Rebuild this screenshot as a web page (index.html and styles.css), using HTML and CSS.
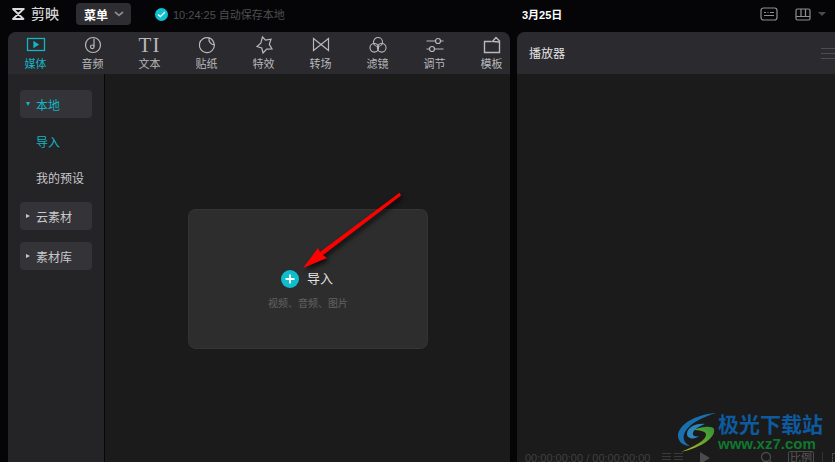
FILE: index.html
```html
<!DOCTYPE html>
<html lang="zh-CN">
<head>
    <meta charset="UTF-8">
    <meta name="viewport" content="width=device-width, initial-scale=1.0">
    <title>剪映</title>
    <link rel="stylesheet" href="styles.css">
</head>
<body>
    <header class="topbar">
        <div class="brand">
            <svg class="brand-logo" width="14" height="12" viewBox="0 0 14 12" fill="none" stroke="#dcdcdc" stroke-width="1.800" stroke-linejoin="round"><path d="M13.500 1H2L12.500 11H2L12.500 1"/></svg>
            <span class="brand-name">剪映</span>
        </div>
        <button class="menu-btn" type="button">菜单
            <svg width="10" height="6" viewBox="0 0 10 6" fill="none" stroke="#8a8a8e" stroke-width="1.800"><path d="M1 1l4 3.400L9 1"/></svg>
        </button>
        <div class="autosave">
            <span class="check-dot"><svg width="9" height="7" viewBox="0 0 9 7" fill="none" stroke="#fff" stroke-width="1.300"><path d="M1 3.600l2.300 2L8 1"/></svg></span>
            <span>10:24:25 自动保存本地</span>
        </div>
        <div class="date">3月25日</div>
        <div class="top-tools">
            <svg width="18" height="14" viewBox="0 0 18 14" fill="none" stroke="#8f8f92" stroke-width="1.200"><rect x="1" y="1" width="16" height="12" rx="2.500"/><path d="M4 5.500h2M7.500 5.500h1M10 5.500h4M4 8.500h10"/></svg>
            <svg class="layout-icon" width="16" height="13" viewBox="0 0 16 13" fill="none" stroke="#8f8f92" stroke-width="1.200"><rect x="1" y="1" width="14" height="11" rx="1.500"/><path d="M1 8.500h14M6 1v7.500M10.500 1v7.500"/></svg>
            <span class="caret-down"></span>
        </div>
    </header>

    <main class="workspace">
        <section class="panel media-panel">
            <nav class="tabs">
                <a class="tab active" href="#media">
                    <svg width="20" height="20" viewBox="0 0 20 20" fill="none" stroke="#14b5c4" stroke-width="1.300"><rect x="1.500" y="3.500" width="17" height="12"/><path d="M8 7l4 2.500-4 2.500z" fill="#14b5c4"/></svg>
                    <span>媒体</span>
                </a>
                <a class="tab" href="#audio">
                    <svg width="20" height="20" viewBox="0 0 20 20" fill="none" stroke="#b9b9bb" stroke-width="1.200"><circle cx="10" cy="10" r="7.500"/><path d="M11 3.500v8"/><circle cx="9.300" cy="11.800" r="1.800"/></svg>
                    <span>音频</span>
                </a>
                <a class="tab" href="#text">
                    <span class="tab-glyph">TI</span>
                    <span>文本</span>
                </a>
                <a class="tab" href="#sticker">
                    <svg width="20" height="20" viewBox="0 0 20 20" fill="none" stroke="#b9b9bb" stroke-width="1.200"><path d="M12 2.900A7.500 7.500 0 1 0 17.400 10 6 6 0 0 1 12 2.900zM12 2.900c2.700.8 4.800 3.500 5.400 7.100"/></svg>
                    <span>贴纸</span>
                </a>
                <a class="tab" href="#effect">
                    <svg width="20" height="20" viewBox="0 0 20 20" fill="none" stroke="#b9b9bb" stroke-width="1.200"><path d="M8.500 2l3 3.200 5.500-1-1.700 5.200 2.700 4.600-5.300.2-3.700 3.800-1.300-5L3 11.500l3.800-3.300z"/></svg>
                    <span>特效</span>
                </a>
                <a class="tab" href="#transition">
                    <svg width="20" height="20" viewBox="0 0 20 20" fill="none" stroke="#b9b9bb" stroke-width="1.200"><path d="M2.500 3.500v12L17.500 3.500v12z"/></svg>
                    <span>转场</span>
                </a>
                <a class="tab" href="#filter">
                    <svg width="20" height="20" viewBox="0 0 20 20" fill="none" stroke="#b9b9bb" stroke-width="1.100"><circle cx="10" cy="7" r="4.500"/><circle cx="6.300" cy="12.800" r="4.300"/><circle cx="13.700" cy="12.800" r="4.300"/></svg>
                    <span>滤镜</span>
                </a>
                <a class="tab" href="#adjust">
                    <svg width="20" height="20" viewBox="0 0 20 20" fill="none" stroke="#b9b9bb" stroke-width="1.200"><path d="M1.500 6h9M15.500 6h3M1.500 14h3M9.500 14h9"/><circle cx="13" cy="6" r="2.500"/><circle cx="7" cy="14" r="2.500"/></svg>
                    <span>调节</span>
                </a>
                <a class="tab" href="#template">
                    <svg width="20" height="20" viewBox="0 0 20 20" fill="none" stroke="#b9b9bb" stroke-width="1.400"><path d="M9.500 6.500H2.500v11h15v-11"/><path d="M10.500 6.500l3.500-4 3.500 3.500-1 1z"/></svg>
                    <span>模板</span>
                </a>
            </nav>
            <div class="media-body">
                <aside class="sidebar">
                    <div class="side-group active"><span class="tri-down"></span>本地</div>
                    <a class="side-link active" href="#import">导入</a>
                    <a class="side-link" href="#presets">我的预设</a>
                    <div class="side-group"><span class="tri-right"></span>云素材</div>
                    <div class="side-group"><span class="tri-right"></span>素材库</div>
                </aside>
                <div class="drop-area">
                    <div class="drop-card">
                        <div class="drop-title">
                            <span class="plus-dot"><svg width="10" height="10" viewBox="0 0 10 10" stroke="#fff" stroke-width="1.800"><path d="M5 .5v9M.5 5h9"/></svg></span>
                            <span>导入</span>
                        </div>
                        <p class="drop-hint">视频、音频、图片</p>
                    </div>
                </div>
            </div>
        </section>

        <section class="panel player-panel">
            <div class="player-head">
                <span>播放器</span>
                <span class="head-menu"></span>
            </div>
            <div class="player-view"></div>
            <div class="player-foot">
                <span class="timecode">00:00:00:00 / 00:00:00:00</span>
                <span class="grid-btn"></span>
                <span class="grid-btn"></span>
                <span class="play-btn"></span>
                <svg class="zoom-btn" width="14" height="14" viewBox="0 0 14 14" fill="none" stroke="#4b4b4b" stroke-width="1.300"><circle cx="6" cy="6" r="4.500"/><path d="M9.500 9.500l3 3"/></svg>
                <span class="ratio-btn">比例</span>
                <span class="foot-sep"></span>
                <span class="full-btn"></span>
            </div>
        </section>
    </main>

    <svg class="arrow" width="120" height="90" viewBox="295 185 120 90">
        <path d="M399.500 192.800L320 252l-2-4-15 20 24-10-4-3 78-59.500z" fill="#f00"/>
    </svg>

    <div class="watermark">
        <svg class="wm-logo" width="46" height="42" viewBox="0 0 46 42">
            <defs>
                <linearGradient id="wmGreen" x1="0" y1="1" x2="1" y2="0">
                    <stop offset="0" stop-color="#c9b02a"/>
                    <stop offset="0.6" stop-color="#5fa52e"/>
                    <stop offset="1" stop-color="#2f8f3a"/>
                </linearGradient>
            </defs>
            <path d="M41 2C24 3 6 11 3 23c-1 7 5 12 12 12-6-3-8-8-5-14C15 12 28 6 41 2z" fill="#1a6fae"/>
            <path d="M30 13c-10-1-18 4-18 10 0 5 8 6 12 2-3 1-7 0-6-3 1-4 7-7 12-9z" fill="#2a86bd"/>
            <path d="M19 19c5-3 19-5 20-1 2 8-11 18-33 23 14-6 26-12 25-18-1-3-7-4-12-4z" fill="url(#wmGreen)"/>
        </svg>
        <div class="wm-text">
            <span class="wm-name">极光下载站</span>
            <span class="wm-url">www.xz7.com</span>
        </div>
    </div>
</body>
</html>
```

FILE: styles.css
```css
:root {
    --top-bg: #050507;
    --panel-head: #2a2a2f;
    --side-bg: #242427;
    --body-bg: #1b1b1b;
    --group-bg: #333338;
    --accent: #14b5c4;
    --text: #c9c9cb;
}

* {
    margin: 0;
    padding: 0;
    box-sizing: border-box;
}

body {
    width: 835px;
    height: 462px;
    overflow: hidden;
    background-color: var(--top-bg);
    color: var(--text);
    font-family: "Liberation Sans", "Noto Sans CJK SC", sans-serif;
    font-size: 12px;
}

a {
    color: inherit;
    text-decoration: none;
}

/* top bar */
.topbar {
    display: flex;
    align-items: center;
    height: 32px;
    padding: 0 0 4px 11px;
}

.brand {
    display: flex;
    align-items: center;
    gap: 6px;
    width: 65px;
}

.brand-name {
    color: #d4d4d4;
    font-size: 14px;
    font-weight: 500;
    line-height: 1;
}

.menu-btn {
    display: flex;
    align-items: center;
    justify-content: space-between;
    width: 55px;
    height: 22px;
    padding: 0 7px 0 8px;
    border: none;
    border-radius: 4px;
    background-color: #2e2e32;
    color: #fff;
    font-family: inherit;
    font-size: 12px;
    font-weight: 700;
}

.autosave {
    display: flex;
    align-items: center;
    gap: 5px;
    margin-left: 24px;
    width: 340px;
    color: #4e4e52;
    font-size: 11px;
}

.check-dot {
    display: flex;
    align-items: center;
    justify-content: center;
    width: 13px;
    height: 13px;
    border-radius: 50%;
    background-color: #0fc0d0;
}

.date {
    width: 230px;
    margin-left: 27px;
    color: #fff;
    font-size: 11px;
    font-weight: 700;
}

.top-tools {
    display: flex;
    align-items: center;
    margin-left: 8px;
}

.layout-icon {
    margin-left: 17px;
}

.caret-down {
    margin-left: 7px;
    border-top: 4px solid #4a4a4e;
    border-left: 4px solid transparent;
    border-right: 4px solid transparent;
}

/* panels */
.workspace {
    display: flex;
    gap: 7px;
    height: 440px;
    padding-left: 8px;
}

.panel {
    display: flex;
    flex-direction: column;
    overflow: hidden;
    border-radius: 8px 8px 0 0;
    background-color: var(--body-bg);
}

.media-panel {
    width: 502px;
}

.player-panel {
    flex: 1;
    border-top-right-radius: 0;
}

.tabs {
    display: flex;
    flex: none;
    height: 42px;
    margin-left: -1px;
    background-color: var(--panel-head);
}

.tab {
    display: flex;
    flex: none;
    flex-direction: column;
    align-items: center;
    width: 57px;
    padding-top: 3px;
    color: #b9b9bb;
    font-size: 11px;
    line-height: 16px;
}

.tab svg {
    margin-bottom: 1px;
}

.tab.active {
    color: var(--accent);
}

.tab-glyph {
    height: 21px;
    color: #b9b9bb;
    font-family: "Liberation Serif", serif;
    font-size: 21px;
    letter-spacing: 1px;
    line-height: 20px;
}

.media-body {
    display: flex;
    flex: 1;
}

.sidebar {
    display: flex;
    flex-direction: column;
    width: 97px;
    padding: 16px 12px 0;
    border-right: 1px solid #08080a;
    background-color: var(--side-bg);
}

.side-group {
    display: flex;
    align-items: center;
    height: 28px;
    margin-bottom: 12px;
    padding-left: 6px;
    border-radius: 4px;
    background-color: var(--group-bg);
    font-size: 12px;
}

.side-group.active {
    margin-bottom: 0;
    color: var(--accent);
}

.side-link {
    height: 36px;
    margin-bottom: 6px;
    padding-left: 16px;
    font-size: 12px;
    line-height: 38px;
}

.side-link.active {
    margin-top: 6px;
    margin-bottom: 0;
    color: var(--accent);
}

.tri-down {
    margin-right: 6px;
    border-top: 4px solid var(--accent);
    border-left: 2px solid transparent;
    border-right: 2px solid transparent;
}

.tri-right {
    margin-right: 6px;
    border-left: 4px solid #c9c9cb;
    border-top: 2.500px solid transparent;
    border-bottom: 2.500px solid transparent;
}

.drop-area {
    flex: 1;
    padding: 135px 0 0 83px;
}

.drop-card {
    display: flex;
    flex-direction: column;
    align-items: center;
    width: 240px;
    height: 140px;
    padding-top: 60px;
    border: 1px dotted #3d3d3d;
    border-radius: 8px;
    background-color: #2d2d2d;
}

.drop-title {
    display: flex;
    align-items: center;
    gap: 8px;
    color: #e2e2e2;
    font-size: 13px;
    line-height: 18px;
}

.plus-dot {
    display: flex;
    align-items: center;
    justify-content: center;
    width: 18px;
    height: 18px;
    margin-left: -2px;
    border-radius: 50%;
    background-color: #0fbecd;
}

.drop-hint {
    margin-top: 9px;
    color: #636363;
    font-size: 10px;
    line-height: 14px;
}

/* player */
.player-head {
    display: flex;
    flex: none;
    align-items: center;
    justify-content: space-between;
    height: 42px;
    padding: 0 0 2px 12px;
    background-color: var(--panel-head);
    color: #e4e4e4;
    font-size: 12px;
}

.head-menu {
    width: 14px;
    height: 11px;
    margin-top: 2px;
    border-top: 1px solid #4d4d51;
    border-bottom: 1px solid #4d4d51;
    background: linear-gradient(#4d4d51, #4d4d51) center / 100% 1px no-repeat;
}

.player-view {
    flex: 1;
}

.player-foot {
    display: flex;
    flex: none;
    align-items: center;
    height: 28px;
    padding-left: 8px;
    color: #404040;
    font-size: 11px;
    white-space: nowrap;
}

.timecode {
    flex: none;
    width: 137px;
}

.grid-btn {
    flex: none;
    width: 9px;
    height: 10px;
    margin-right: 3px;
    background: repeating-linear-gradient(#3a3a3a 0 1px, transparent 1px 3px);
}

.play-btn {
    flex: none;
    margin-left: 14px;
    border-left: 10px solid #4b4b4b;
    border-top: 6px solid transparent;
    border-bottom: 6px solid transparent;
}

.zoom-btn {
    flex: none;
    margin-left: 50px;
}

.ratio-btn {
    flex: none;
    margin-left: 14px;
    padding: 0 1px;
    border: 1px solid #4b4b4b;
    border-radius: 2px;
    color: #5a5a5a;
    font-size: 11px;
    line-height: 13px;
}

.foot-sep {
    flex: none;
    width: 1px;
    height: 12px;
    margin-left: 8px;
    background-color: #333;
}

.full-btn {
    flex: none;
    width: 10px;
    height: 10px;
    margin-left: 9px;
    border: 1px dashed #4b4b4b;
}

/* overlays on the screenshot */
.arrow {
    position: absolute;
    left: 295px;
    top: 185px;
    filter: drop-shadow(2px 3px 2px rgba(0, 0, 0, 0.7));
}

.watermark {
    position: absolute;
    left: 675px;
    top: 411px;
    display: flex;
}

.wm-logo {
    flex: none;
}

.wm-text {
    display: flex;
    flex-direction: column;
    margin-left: -3px;
}

.wm-name {
    color: #0d5a9e;
    font-family: "Noto Sans CJK SC", sans-serif;
    font-size: 21px;
    font-weight: 700;
    line-height: 24px;
}

.wm-url {
    margin-top: 1px;
    color: #10782f;
    font-size: 15px;
    font-weight: 700;
    line-height: 16px;
}
```
